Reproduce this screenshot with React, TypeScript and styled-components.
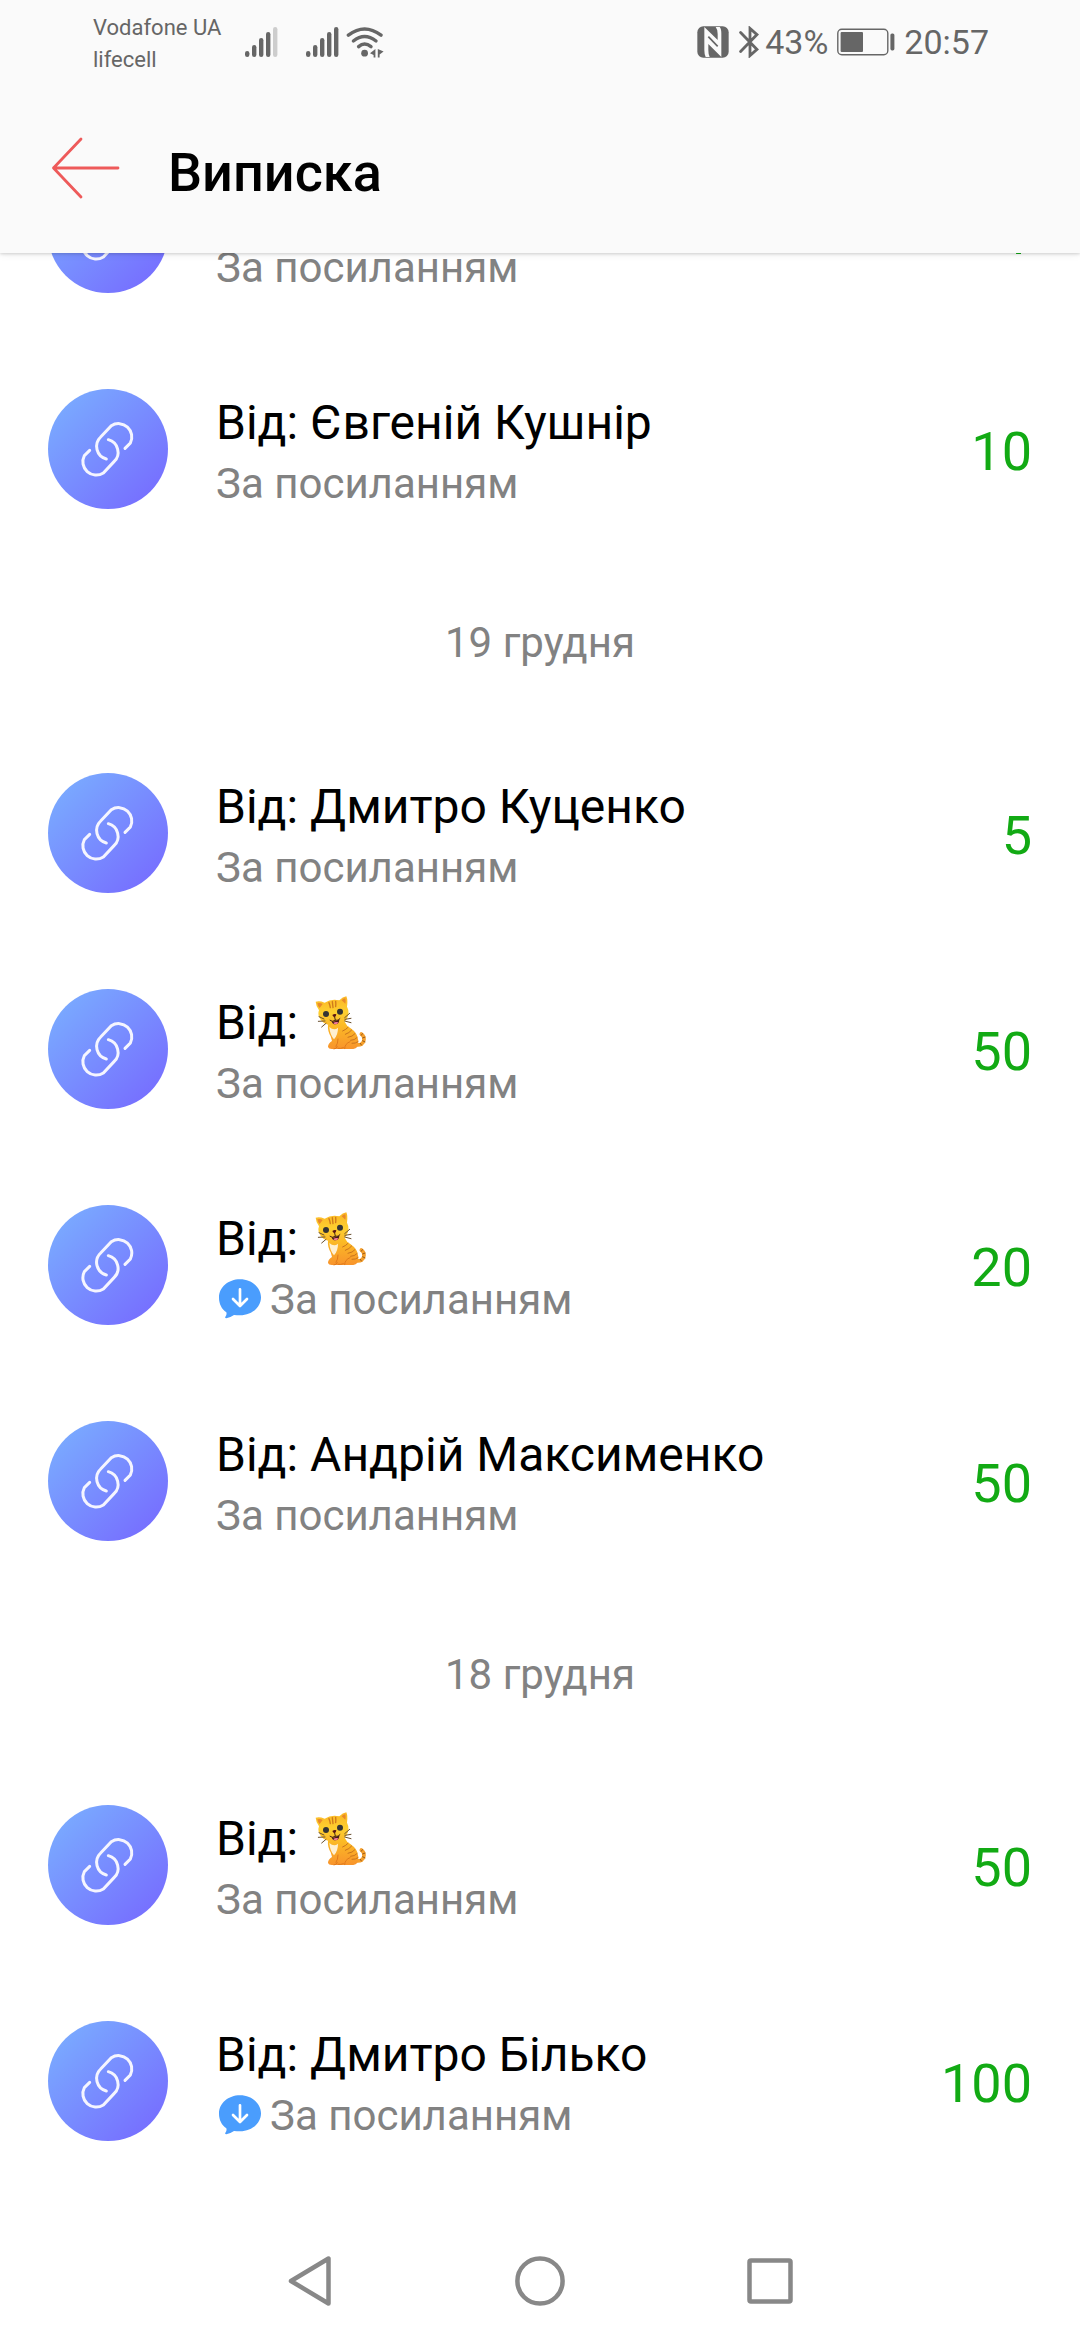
import React from "react";
import styled, { createGlobalStyle } from "styled-components";

const GlobalStyle = createGlobalStyle`
  *, *::before, *::after { box-sizing: border-box; }
  body {
    margin: 0;
    background: #fff;
    color: #000;
    font-family: Roboto, "Noto Sans", sans-serif;
  }
`;

const Screen = styled.div`
  display: flex;
  flex-direction: column;
  min-height: 100vh;
`;

const Header = styled.header`
  position: sticky;
  top: 0;
  z-index: 1;
  background: #fafafa;
  box-shadow: 0 1px 3px rgba(0, 0, 0, 0.16), 0 2px 8px rgba(0, 0, 0, 0.06);
`;

const StatusBar = styled.div`
  display: flex;
  align-items: center;
  justify-content: space-between;
  height: 84px;
  padding: 0 91px 0 93px;
  color: #666;
`;

const StatusGroup = styled.div`
  display: flex;
  align-items: center;
`;

const Carriers = styled.div`
  margin-right: 23px;
  padding-top: 4px;
  font-size: 22px;
  line-height: 32px;
  white-space: nowrap;
`;

const StatusText = styled.span`
  font-size: 34px;
  line-height: 40px;
`;

const BatteryLevel = styled(StatusText)`
  margin-right: 9px;
`;

const StatusIcon = styled.svg<{ $gap?: number }>`
  display: block;
  flex: none;
  margin-right: ${(p) => p.$gap ?? 0}px;
`;

const AppBar = styled.div`
  display: flex;
  align-items: center;
  gap: 48px;
  padding: 49px 48px;
`;

const BackButton = styled.button`
  display: flex;
  flex: none;
  padding: 0 0 2px;
  border: 0;
  background: none;
  cursor: pointer;
`;

const Title = styled.h1`
  margin: 0;
  padding-top: 8px;
  font-size: 54px;
  line-height: 63px;
  font-weight: 500;
`;

const Feed = styled.main`
  flex: 1;
  margin-top: -128px;
`;

const DayList = styled.ul`
  margin: 0;
  padding: 0;
  list-style: none;
`;

const DayTitle = styled.h2`
  margin: 0;
  height: 168px;
  color: #828282;
  font-size: 42px;
  line-height: 172px;
  font-weight: 400;
  text-align: center;
`;

const Row = styled.li`
  display: flex;
  gap: 48px;
  padding: 48px;
`;

const Avatar = styled.div`
  display: flex;
  flex: none;
  width: 120px;
  height: 120px;
  border-radius: 50%;
  background: linear-gradient(135deg, #7ab2ff 0%, #7666ff 100%);
`;

const Details = styled.div`
  display: flex;
  flex: 1;
  flex-direction: column;
  gap: 8px;
  min-width: 0;
  padding-top: 6px;
`;

const Name = styled.div`
  display: flex;
  align-items: center;
  height: 56px;
  font-size: 48px;
  line-height: 56px;
  white-space: pre;
`;

const Source = styled.div`
  display: flex;
  align-items: center;
  gap: 6px;
  color: #828282;
  font-size: 42px;
  line-height: 49px;
`;

const Amount = styled.div`
  align-self: center;
  padding-top: 4px;
  color: #12aa14;
  font-size: 54px;
  line-height: 63px;
`;

const NavBar = styled.nav`
  position: sticky;
  bottom: 0;
  display: grid;
  grid-template-columns: repeat(3, 230px);
  justify-content: center;
  background: #fff;
`;

const NavButton = styled.button`
  display: flex;
  align-items: center;
  justify-content: center;
  height: 118px;
  padding: 0;
  border: 0;
  background: none;
  cursor: pointer;
`;

const SignalIcon = ({ bars, gap }: { bars: number; gap: number }) => (
  <StatusIcon $gap={gap} width="34" height="32" viewBox="0 0 34 32" aria-hidden="true">
    {[6, 12, 19, 25, 30].map((h, i) => (
      <rect
        key={h}
        x={1 + i * 7}
        y={31 - h}
        width="4.4"
        height={h}
        rx="2.2"
        fill="currentColor"
        opacity={i < bars ? 1 : 0.3}
      />
    ))}
  </StatusIcon>
);

const WifiIcon = () => (
  <StatusIcon width="38" height="32" viewBox="0 0 38 32" aria-hidden="true">
    <g fill="none" stroke="currentColor" strokeWidth="3.4" strokeLinecap="round">
      <path d="M2.4 9.2Q18.5-3.4 35 9.2" />
      <path d="M7.4 15Q18.5 6 30 15" />
      <path d="M12.6 20.6Q18.5 15.4 25 20.6" />
    </g>
    <circle cx="18.6" cy="27.2" r="3.4" fill="currentColor" />
    <path d="M29.4 23V31.400H27.600V29L24 27.200ZM31.800 23 37.600 25.600 33.600 28.600V31.400H31.800Z" fill="currentColor" />
  </StatusIcon>
);

const NfcIcon = () => (
  <StatusIcon $gap={10} width="32" height="32" viewBox="0 0 96 96" aria-hidden="true">
    <rect x="1" y="1" width="94" height="94" rx="18" fill="currentColor" />
    <path
      d="M22 3 62 42V24Q62 10 56 3H68Q73 8 73 22V93L34 54V72Q34 86 38 93H26Q22 86 22 72Z"
      fill="#fafafa"
    />
    <path d="M34 32 62 61" stroke="currentColor" strokeWidth="5" />
  </StatusIcon>
);

const BluetoothIcon = () => (
  <StatusIcon $gap={6} width="20" height="32" viewBox="0 0 20 32" aria-hidden="true">
    <path
      d="M1.6 6.6 18 23.4 11 29.6V2.4L18 8.6 1.6 25.4"
      fill="none"
      stroke="currentColor"
      strokeWidth="2.8"
      strokeLinejoin="miter"
      strokeLinecap="round"
    />
  </StatusIcon>
);

const BatteryIcon = () => (
  <StatusIcon $gap={9} width="58" height="28" viewBox="0 0 58 28" aria-hidden="true">
    <rect x="0.8" y="1.2" width="50" height="25.6" rx="4" fill="none" stroke="currentColor" strokeWidth="1.4" />
    <rect x="3.6" y="4" width="22.4" height="20" rx="1" fill="currentColor" />
    <rect x="53.4" y="5.4" width="4" height="17" rx="1.6" fill="currentColor" />
  </StatusIcon>
);

const ArrowIcon = () => (
  <svg width="72" height="63" viewBox="0 0 72 63" aria-hidden="true">
    <path
      d="M33 3 5.5 32 33 61M5.5 32H70"
      fill="none"
      stroke="#ee5a5a"
      strokeWidth="2.8"
      strokeLinecap="round"
      strokeLinejoin="round"
    />
  </svg>
);

const LINK_HALF = "M231 178 247 162A40 40 0 0 0 190 110L158 144A39 39 0 0 0 175 210";

const LinkIcon = () => (
  <svg width="120" height="120" viewBox="0 0 360 360" aria-hidden="true">
    <g fill="none" stroke="#f5f5ff" strokeWidth="9" strokeLinecap="round">
      <path d={LINK_HALF} />
      <path d={LINK_HALF} transform="rotate(180 178 181)" />
    </g>
  </svg>
);

const MessageIcon = () => (
  <svg width="48" height="48" viewBox="0 0 144 144" role="img" aria-label="Повідомлення">
    <path
      d="M72 10C107 10 135 34 135 64S107 118 72 118Q62 118 54 117Q44 124 31 127Q25 127 29 121Q33 115 31 109C17 99 9 83 9 65C9 34 37 10 72 10Z"
      fill="#4a9dfd"
    />
    <path
      d="M72 40V89M51 69 72 90 93 69"
      fill="none"
      stroke="#fff"
      strokeWidth="8"
      strokeLinecap="round"
      strokeLinejoin="round"
    />
  </svg>
);

const CatIcon = () => (
  <svg width="60" height="56" viewBox="0 4 180 168" role="img" aria-label="Кіт">
    <defs>
      <linearGradient id="catBody" x1="0" y1="0" x2="0" y2="1">
        <stop offset="0" stopColor="#fcc024" />
        <stop offset="1" stopColor="#f8942c" />
      </linearGradient>
      <linearGradient id="catHead" x1="0" y1="0" x2="0" y2="1">
        <stop offset="0" stopColor="#fbb626" />
        <stop offset="0.55" stopColor="#fdcf2f" />
        <stop offset="1" stopColor="#fbb829" />
      </linearGradient>
    </defs>
    <path
      d="M136 153Q160 157 162 138Q163 127 154 121"
      fill="none"
      stroke="#f6a02c"
      strokeWidth="11"
      strokeLinecap="round"
    />
    <path d="M150 148l5 7M157 141l9 4M157 133l9-3M153 126l5-7" stroke="#9a5a18" strokeWidth="3" />
    <path
      d="M54 92Q52 112 62 128L66 142Q54 150 54 160Q56 167 68 166H130Q146 164 145 142Q143 118 122 104Q110 98 104 84Z"
      fill="url(#catBody)"
    />
    <path d="M58 100Q72 112 84 102Q84 124 72 137Q60 124 58 100Z" fill="#fff0d0" />
    <path
      d="M84 136Q84 150 78 158M104 165Q104 150 120 144M72 166Q80 166 82 158M84 164Q92 166 100 162"
      fill="none"
      stroke="#e07a1c"
      strokeWidth="3"
      strokeLinecap="round"
    />
    <path
      d="M98 112Q108 108 114 101M106 122Q118 118 125 109M114 131Q128 129 135 120M122 140Q134 140 141 132M126 149Q137 150 144 144"
      fill="none"
      stroke="#c8741e"
      strokeWidth="3"
      strokeLinecap="round"
    />
    <path
      d="M17 24Q28 20 44 27Q64 14 88 20Q98 9 109 8Q114 18 111 39Q121 58 109 78Q96 96 66 95Q34 92 26 66Q24 57 27 50Q18 38 17 24Z"
      fill="url(#catHead)"
    />
    <path d="M22 29Q31 26 38 31L29 43Q23 37 22 29ZM95 20Q100 14 106 14Q108 22 106 30Z" fill="#e8892a" />
    <path
      d="M57 27Q60 34 61 42M67 24 69 42M77 23Q78 31 77 39"
      fill="none"
      stroke="#cf7a1c"
      strokeWidth="4"
      strokeLinecap="round"
    />
    <circle cx="48" cy="61" r="9" fill="#343434" />
    <circle cx="90" cy="54" r="9" fill="#343434" />
    <path d="M67 64Q73 60 79 62Q78 70 74 71Q69 70 67 64Z" fill="#5a1414" />
    <path d="M65 82Q76 86 88 77Q88 91 78 92Q67 93 65 82Z" fill="#4a1818" />
    <path d="M70 88Q77 83 85 86Q84 91 78 92Q72 92 70 88Z" fill="#f27a9c" />
    <path d="M74 70 76 80Q66 86 60 80M76 80Q86 82 90 75" fill="none" stroke="#4a2a18" strokeWidth="3" strokeLinecap="round" />
    <path
      d="M27 69 42 76M25 83 45 82M35 100 48 89M104 72 119 59M105 77 123 74M104 82 123 87"
      stroke="#6a5030"
      strokeWidth="3"
      strokeLinecap="round"
    />
  </svg>
);

interface Transfer {
  from?: React.ReactNode;
  amount: number;
  message?: boolean;
}

interface Day {
  date?: string;
  transfers: Transfer[];
}

const days: Day[] = [
  {
    transfers: [{ amount: 1 }, { from: "Євгеній Кушнір", amount: 10 }],
  },
  {
    date: "19 грудня",
    transfers: [
      { from: "Дмитро Куценко", amount: 5 },
      { from: <CatIcon />, amount: 50 },
      { from: <CatIcon />, amount: 20, message: true },
      { from: "Андрій Максименко", amount: 50 },
    ],
  },
  {
    date: "18 грудня",
    transfers: [
      { from: <CatIcon />, amount: 50 },
      { from: "Дмитро Білько", amount: 100, message: true },
    ],
  },
];

const TransferRow = ({ from, amount, message }: Transfer) => (
  <Row>
    <Avatar>
      <LinkIcon />
    </Avatar>
    <Details>
      <Name>
        {from && "Від: "}
        {from}
      </Name>
      <Source>
        {message && <MessageIcon />}
        За посиланням
      </Source>
    </Details>
    <Amount>{amount}</Amount>
  </Row>
);

export default function App() {
  return (
    <Screen>
      <GlobalStyle />
      <Header>
        <StatusBar>
          <StatusGroup>
            <Carriers>
              <div>Vodafone UA</div>
              <div>lifecell</div>
            </Carriers>
            <SignalIcon bars={4} gap={27} />
            <SignalIcon bars={5} gap={7} />
            <WifiIcon />
          </StatusGroup>
          <StatusGroup>
            <NfcIcon />
            <BluetoothIcon />
            <BatteryLevel>43%</BatteryLevel>
            <BatteryIcon />
            <StatusText>20:57</StatusText>
          </StatusGroup>
        </StatusBar>
        <AppBar>
          <BackButton type="button" aria-label="Назад">
            <ArrowIcon />
          </BackButton>
          <Title>Виписка</Title>
        </AppBar>
      </Header>
      <Feed>
        {days.map((day) => (
          <section key={day.date ?? "latest"}>
            {day.date && <DayTitle>{day.date}</DayTitle>}
            <DayList>
              {day.transfers.map((transfer, i) => (
                <TransferRow key={i} {...transfer} />
              ))}
            </DayList>
          </section>
        ))}
      </Feed>
      <NavBar>
        <NavButton type="button" aria-label="Назад">
          <svg width="46" height="52" viewBox="0 0 46 52" aria-hidden="true">
            <path d="M41.5 3.5V48.5L4 26Z" fill="none" stroke="#888" strokeWidth="4.5" strokeLinejoin="round" />
          </svg>
        </NavButton>
        <NavButton type="button" aria-label="Додому">
          <svg width="50" height="50" viewBox="0 0 50 50" aria-hidden="true">
            <circle cx="25" cy="25" r="22.6" fill="none" stroke="#888" strokeWidth="4.5" />
          </svg>
        </NavButton>
        <NavButton type="button" aria-label="Останні програми">
          <svg width="46" height="46" viewBox="0 0 46 46" aria-hidden="true">
            <rect x="2.5" y="2.5" width="41" height="41" rx="1.5" fill="none" stroke="#888" strokeWidth="4.5" />
          </svg>
        </NavButton>
      </NavBar>
    </Screen>
  );
}
